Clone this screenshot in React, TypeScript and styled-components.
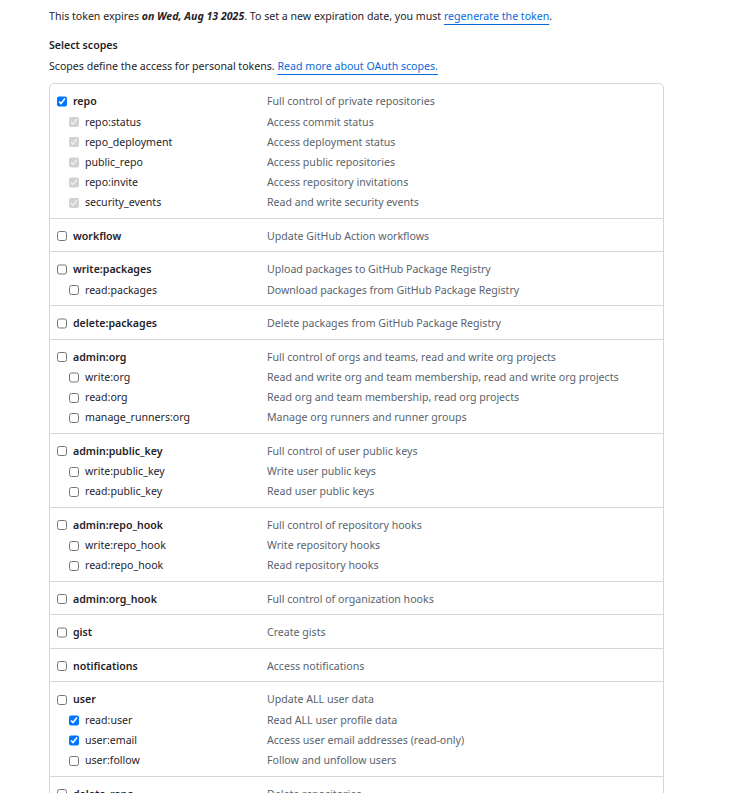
import React from "react";
import styled, { createGlobalStyle } from "styled-components";

const FONT = `"Segoe UI", "Noto Sans", "Liberation Sans", sans-serif`;

const GlobalStyle = createGlobalStyle`
  html, body { margin: 0; padding: 0; background: #ffffff; }
  body { font-family: ${FONT}; color: #1f2328; }
`;

type Scope = { name: string; desc: string; checked?: boolean; disabled?: boolean };
type Group = Scope & { children?: Scope[] };

const repoChild = (name: string, desc: string): Scope => ({ name, desc, checked: true, disabled: true });

const groups: Group[] = [
  {
    name: "repo",
    desc: "Full control of private repositories",
    checked: true,
    children: [
      repoChild("repo:status", "Access commit status"),
      repoChild("repo_deployment", "Access deployment status"),
      repoChild("public_repo", "Access public repositories"),
      repoChild("repo:invite", "Access repository invitations"),
      repoChild("security_events", "Read and write security events"),
    ],
  },
  { name: "workflow", desc: "Update GitHub Action workflows" },
  {
    name: "write:packages",
    desc: "Upload packages to GitHub Package Registry",
    children: [{ name: "read:packages", desc: "Download packages from GitHub Package Registry" }],
  },
  { name: "delete:packages", desc: "Delete packages from GitHub Package Registry" },
  {
    name: "admin:org",
    desc: "Full control of orgs and teams, read and write org projects",
    children: [
      { name: "write:org", desc: "Read and write org and team membership, read and write org projects" },
      { name: "read:org", desc: "Read org and team membership, read org projects" },
      { name: "manage_runners:org", desc: "Manage org runners and runner groups" },
    ],
  },
  {
    name: "admin:public_key",
    desc: "Full control of user public keys",
    children: [
      { name: "write:public_key", desc: "Write user public keys" },
      { name: "read:public_key", desc: "Read user public keys" },
    ],
  },
  {
    name: "admin:repo_hook",
    desc: "Full control of repository hooks",
    children: [
      { name: "write:repo_hook", desc: "Write repository hooks" },
      { name: "read:repo_hook", desc: "Read repository hooks" },
    ],
  },
  { name: "admin:org_hook", desc: "Full control of organization hooks" },
  { name: "gist", desc: "Create gists" },
  { name: "notifications", desc: "Access notifications" },
  {
    name: "user",
    desc: "Update ALL user data",
    children: [
      { name: "read:user", desc: "Read ALL user profile data", checked: true },
      { name: "user:email", desc: "Access user email addresses (read-only)", checked: true },
      { name: "user:follow", desc: "Follow and unfollow users" },
    ],
  },
  { name: "delete_repo", desc: "Delete repositories" },
  {
    name: "write:discussion",
    desc: "Read and write team discussions",
    children: [{ name: "read:discussion", desc: "Read team discussions" }],
  },
];

const Page = styled.div`
  padding: 8px 0 40px 49px;
  font-size: 10.6px;
  line-height: 17px;
`;

const Intro = styled.p`
  margin: 0 0 12px;
`;

const Link = styled.a`
  color: #0969da;
  text-decoration: underline;
  text-underline-offset: 3.5px;
  text-decoration-thickness: 1px;
`;

const Heading = styled.div`
  font-weight: 600;
  margin-bottom: 4px;
`;

const Note = styled.p`
  margin: 0 0 8px;
`;

const ScopeBox = styled.div`
  width: 615px;
  box-sizing: border-box;
  border: 1px solid #d1d9e0;
  border-radius: 5px;
`;

const GroupBlock = styled.div`
  padding: 7px 0 4.6px;
  & + & {
    border-top: 1px solid #d1d9e0;
  }
`;

const Row = styled.div<{ $sub?: boolean }>`
  display: grid;
  align-items: center;
  height: ${(p) => (p.$sub ? "20.2px" : "21px")};
  padding-left: ${(p) => (p.$sub ? "19px" : "7px")};
  grid-template-columns: ${(p) => (p.$sub ? "198px" : "210px")} 1fr;
`;

const Label = styled.label<{ $sub?: boolean }>`
  display: flex;
  align-items: center;
  gap: 5.6px;
  font-weight: ${(p) => (p.$sub ? 400 : 600)};
  color: #1f2328;
  white-space: nowrap;
`;

const Box = styled.input`
  width: 10.4px;
  height: 10.4px;
  margin: 0;
  flex: none;
  accent-color: #0075ff;
`;

const Desc = styled.span`
  color: #59636e;
  white-space: nowrap;
`;

const noop = () => {};

function ScopeRow({ scope, sub }: { scope: Scope; sub?: boolean }) {
  return (
    <Row $sub={sub}>
      <Label $sub={sub}>
        <Box
          type="checkbox"
          checked={!!scope.checked}
          disabled={!!scope.disabled}
          onChange={noop}
        />
        {scope.name}
      </Label>
      <Desc>{scope.desc}</Desc>
    </Row>
  );
}

export default function App() {
  return (
    <>
      <GlobalStyle />
      <Page>
        <Intro>
          This token expires{" "}
          <strong>
            <em>on Wed, Aug 13 2025</em>
          </strong>
          . To set a new expiration date, you must <Link href="#">regenerate the token</Link>.
        </Intro>
        <Heading>Select scopes</Heading>
        <Note>
          Scopes define the access for personal tokens. <Link href="#">Read more about OAuth scopes.</Link>
        </Note>
        <ScopeBox>
          {groups.map((g) => (
            <GroupBlock key={g.name}>
              <ScopeRow scope={g} />
              {g.children?.map((c) => (
                <ScopeRow key={c.name} scope={c} sub />
              ))}
            </GroupBlock>
          ))}
        </ScopeBox>
      </Page>
    </>
  );
}
